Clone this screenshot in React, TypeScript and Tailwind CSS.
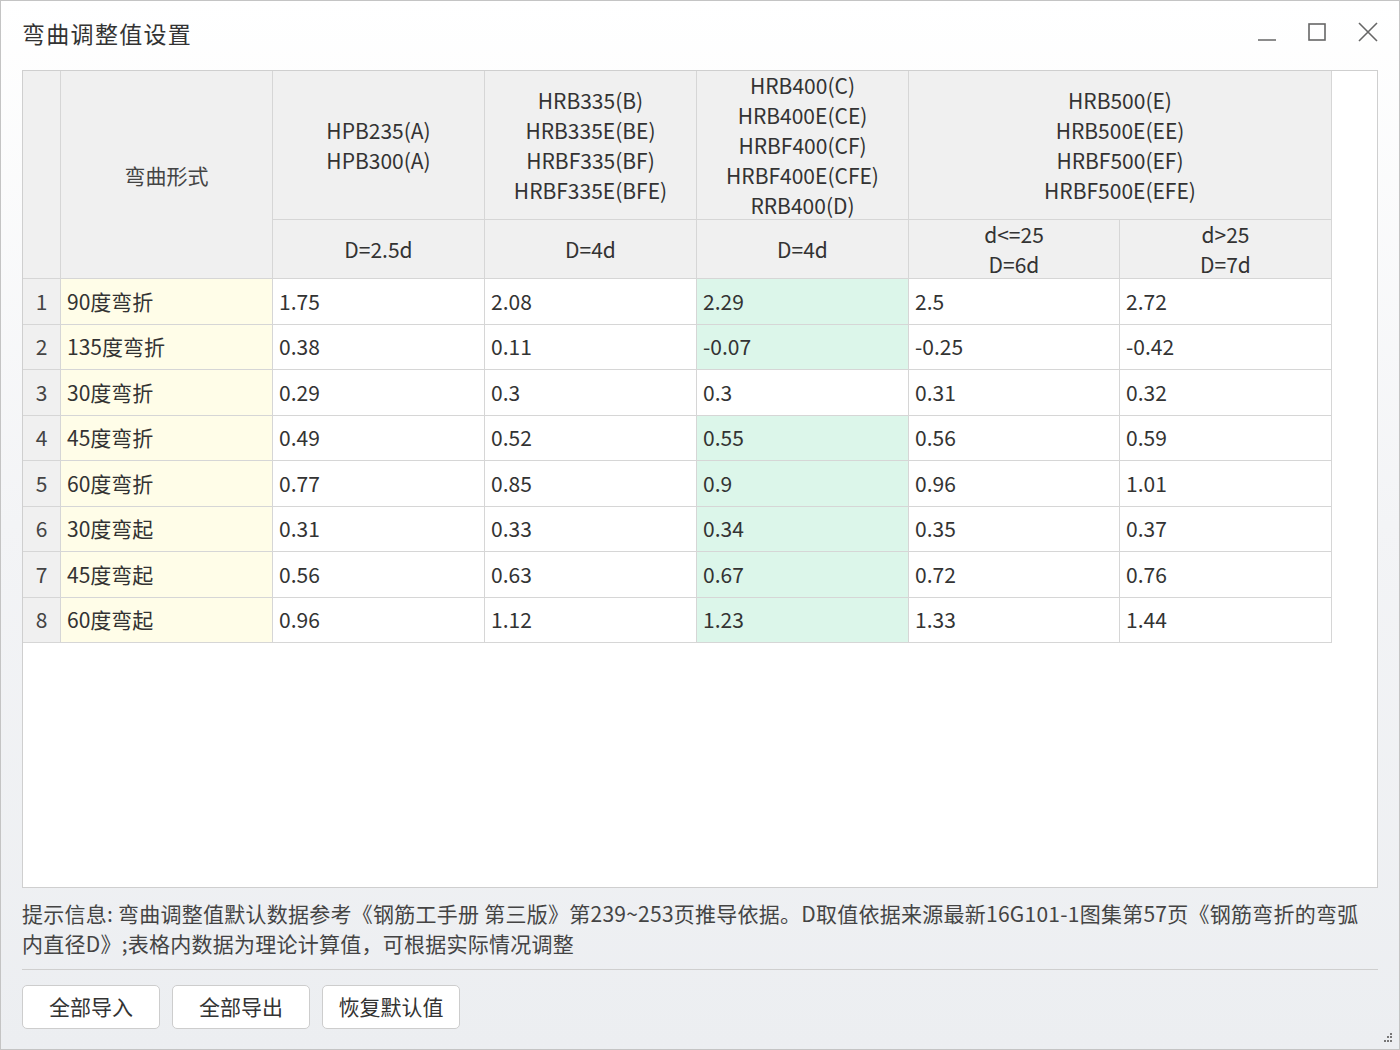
import React from "react";

const rows = [
  { name: "90度弯折", v: ["1.75", "2.08", "2.29", "2.5", "2.72"], green: true },
  { name: "135度弯折", v: ["0.38", "0.11", "-0.07", "-0.25", "-0.42"], green: true },
  { name: "30度弯折", v: ["0.29", "0.3", "0.3", "0.31", "0.32"], green: false },
  { name: "45度弯折", v: ["0.49", "0.52", "0.55", "0.56", "0.59"], green: true },
  { name: "60度弯折", v: ["0.77", "0.85", "0.9", "0.96", "1.01"], green: true },
  { name: "30度弯起", v: ["0.31", "0.33", "0.34", "0.35", "0.37"], green: true },
  { name: "45度弯起", v: ["0.56", "0.63", "0.67", "0.72", "0.76"], green: true },
  { name: "60度弯起", v: ["0.96", "1.12", "1.23", "1.33", "1.44"], green: true },
];

const cols = "grid-cols-[38px_212px_212px_212px_212px_211px_212px]";
const cell = "border-r border-b border-[#d6d6d6]";
const head = `${cell} bg-[#f0f0f0] flex flex-col items-center justify-center leading-[30px] text-center`;

function Lines({ items }: { items: string[] }) {
  return (
    <>
      {items.map((t) => (
        <span key={t}>{t}</span>
      ))}
    </>
  );
}

export default function App() {
  return (
    <div
      className="w-[1400px] h-[1050px] border border-[#c4c4c4] bg-gradient-to-b from-white via-[#f3f4f6] to-[#eceef1] text-[#333] flex flex-col px-[21px]"
      style={{ fontFamily: '"Noto Sans CJK SC", "Noto Sans", sans-serif' }}
    >
      {/* title bar */}
      <div className="h-[69px] flex items-start justify-between">
        <div className="mt-[15px] text-[23px] tracking-[1.3px] text-[#333]">弯曲调整值设置</div>
        <div className="flex items-center gap-[30px] mt-[20px] mr-[-1px] text-[#555]">
          <svg width="20" height="20" viewBox="0 0 20 20">
            <line x1="1" y1="18" x2="19" y2="18" stroke="#666" strokeWidth="1.5" />
          </svg>
          <svg width="20" height="20" viewBox="0 0 20 20">
            <rect x="2" y="2" width="16" height="16" fill="none" stroke="#666" strokeWidth="1.6" />
          </svg>
          <svg width="22" height="22" viewBox="0 0 22 22">
            <path d="M2 2 L20 20 M20 2 L2 20" stroke="#666" strokeWidth="1.6" />
          </svg>
        </div>
      </div>

      {/* table area */}
      <div className="h-[818px] border border-[#cfcfcf] bg-white">
        <div className={`grid ${cols} grid-rows-[149px_59px] w-[1309px] text-[21px]`}>
          <div className={`${head} row-span-2`} />
          <div className={`${head} row-span-2 text-[#444]`}>弯曲形式</div>
          <div className={head}>
            <Lines items={["HPB235(A)", "HPB300(A)"]} />
          </div>
          <div className={head}>
            <Lines items={["HRB335(B)", "HRB335E(BE)", "HRBF335(BF)", "HRBF335E(BFE)"]} />
          </div>
          <div className={head}>
            <Lines items={["HRB400(C)", "HRB400E(CE)", "HRBF400(CF)", "HRBF400E(CFE)", "RRB400(D)"]} />
          </div>
          <div className={`${head} col-span-2`}>
            <Lines items={["HRB500(E)", "HRB500E(EE)", "HRBF500(EF)", "HRBF500E(EFE)"]} />
          </div>
          <div className={head}>D=2.5d</div>
          <div className={head}>D=4d</div>
          <div className={head}>D=4d</div>
          <div className={`${head} leading-[29px]`}>
            <Lines items={["d<=25", "D=6d"]} />
          </div>
          <div className={`${head} leading-[29px]`}>
            <Lines items={["d>25", "D=7d"]} />
          </div>
        </div>
        <div className={`grid ${cols} auto-rows-[45.5px] w-[1309px] text-[21px]`}>
          {rows.map((r, i) => (
            <React.Fragment key={r.name}>
              <div className={`${cell} bg-[#f0f0f0] flex items-center justify-center text-[#444]`}>{i + 1}</div>
              <div className={`${cell} bg-[#fffde8] flex items-center pl-[6px]`}>{r.name}</div>
              {r.v.map((v, j) => (
                <div
                  key={j}
                  className={`${cell} flex items-center pl-[6px] ${j === 2 && r.green ? "bg-[#dcf6ea]" : "bg-white"}`}
                >
                  {v}
                </div>
              ))}
            </React.Fragment>
          ))}
        </div>
      </div>

      {/* hint */}
      <div className="mt-[10px] text-[21px] leading-[30px] text-[#444] tracking-[0.25px] whitespace-nowrap">
        提示信息: 弯曲调整值默认数据参考《钢筋工手册 第三版》第239~253页推导依据。D取值依据来源最新16G101-1图集第57页《钢筋弯折的弯弧
        <br />
        内直径D》;表格内数据为理论计算值，可根据实际情况调整
      </div>

      <div className="mt-[11px] h-px bg-[#cfcfcf]" />

      {/* buttons */}
      <div className="flex gap-[12px] mt-[15px]">
        {["全部导入", "全部导出", "恢复默认值"].map((b) => (
          <button
            key={b}
            className="w-[138px] h-[44px] rounded-[5px] border border-[#cdcdcd] bg-white text-[21px] text-[#333]"
          >
            {b}
          </button>
        ))}
      </div>

      <div className="relative flex-1">
        <svg className="absolute right-[-15px] bottom-[5px]" width="12" height="12" viewBox="0 0 12 12">
          <g fill="#777">
            <rect x="9" y="1" width="2" height="2" />
            <rect x="6" y="4" width="2" height="2" />
            <rect x="9" y="4" width="2" height="2" />
            <rect x="3" y="8" width="2" height="2" />
            <rect x="6" y="8" width="2" height="2" />
            <rect x="9" y="8" width="2" height="2" />
          </g>
        </svg>
      </div>
    </div>
  );
}
